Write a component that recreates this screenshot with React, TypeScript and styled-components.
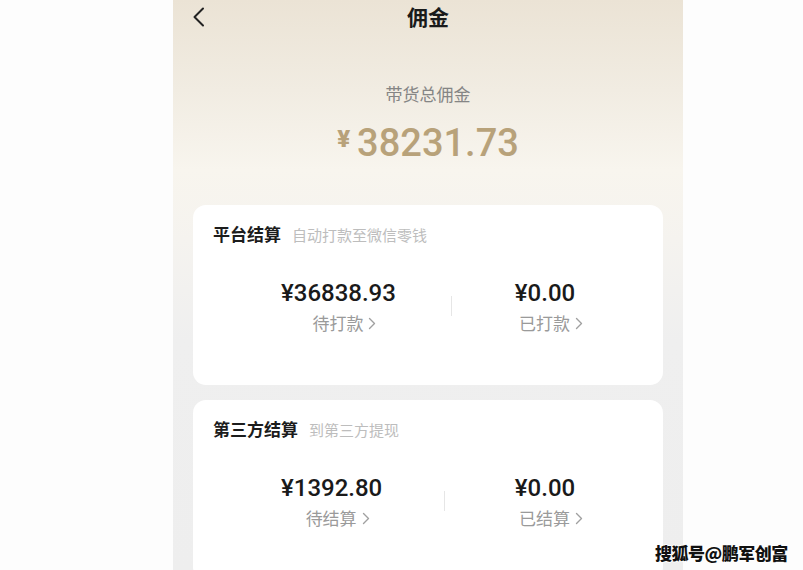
import React from "react";
import styled, { createGlobalStyle } from "styled-components";

const Global = createGlobalStyle`
  html, body { margin: 0; padding: 0; background: #fdfdfd; }
  body { font-family: "Noto Sans CJK SC", "Noto Sans", Roboto, sans-serif; }
  #root { width: 803px; height: 570px; }
`;

const Page = styled.div`
  position: relative;
  width: 803px;
  height: 570px;
  overflow: hidden;
  display: flex;
  padding-left: 173px;
  box-sizing: border-box;
  background: #fdfdfd;
`;

const Phone = styled.div`
  width: 510px;
  height: 570px;
  overflow: hidden;
  display: flex;
  flex-direction: column;
  background: linear-gradient(
    180deg,
    #ebe3d5 0px,
    #f1ece2 90px,
    #f8f5ee 170px,
    #f5f3ef 240px,
    #efefef 340px,
    #eeeeee 100%
  );
`;

const NavBar = styled.div`
  height: 38px;
  display: grid;
  grid-template-columns: 60px 1fr 60px;
  align-items: center;
`;

const BackButton = styled.div`
  display: flex;
  align-items: center;
  padding-left: 19px;
  height: 38px;
  margin-top: -2px;
`;

const Title = styled.div`
  text-align: center;
  font-size: 21px;
  font-weight: 700;
  color: #1a1a1a;
  margin-top: -4px;
`;

const Summary = styled.div`
  display: flex;
  flex-direction: column;
  align-items: center;
  margin-top: 46px;
`;

const SummaryLabel = styled.div`
  font-size: 17px;
  line-height: 24px;
  color: #858585;
`;

const TotalAmount = styled.div`
  margin-top: 13px;
  display: flex;
  align-items: flex-start;
  color: #b8a27a;
  font-family: Roboto, "Noto Sans", sans-serif;
  font-weight: 500;
  height: 48px;
`;

const Yen = styled.span`
  font-size: 24px;
  line-height: 24px;
  margin-top: 8px;
  margin-right: 7px;
  font-weight: 900;
`;

const Big = styled.span`
  font-size: 38px;
  line-height: 48px;
`;

const Cards = styled.div`
  margin-top: 38px;
  padding: 0 20px;
  display: flex;
  flex-direction: column;
  gap: 15px;
`;

const Card = styled.div`
  background: #ffffff;
  border-radius: 13px;
  padding: 17px 20px 51px;
`;

const CardHeader = styled.div`
  display: flex;
  align-items: baseline;
  gap: 11px;
  line-height: 24px;
`;

const CardTitle = styled.span`
  font-size: 17px;
  font-weight: 700;
  color: #1c1c1c;
`;

const CardHint = styled.span`
  font-size: 15px;
  color: #bdbdbd;
`;

const StatRow = styled.div`
  margin-top: 31px;
  display: grid;
  grid-template-columns: auto 1fr auto;
  align-items: center;
  padding: 0 60px 0 68px;
`;

const Stat = styled.div`
  display: flex;
  flex-direction: column;
  align-items: center;
`;

const StatValue = styled.div`
  font-family: Roboto, "Noto Sans", sans-serif;
  font-size: 24px;
  font-weight: 500;
  line-height: 30px;
  color: #1a1a1a;
`;

const StatLabel = styled.div`
  margin-top: 4px;
  display: flex;
  align-items: center;
  gap: 5px;
  font-size: 17px;
  line-height: 22px;
  color: #9a9a9a;
  padding-left: 12px;
`;

const Divider = styled.div`
  justify-self: center;
  width: 1px;
  height: 20px;
  background: #e6e6e6;
`;

const Watermark = styled.div`
  position: absolute;
  left: 655px;
  top: 540px;
  font-size: 17px;
  font-weight: 900;
  color: #111;
  letter-spacing: -0.5px;
  text-shadow: 1px 0 0 #fff, -1px 0 0 #fff, 0 1px 0 #fff, 0 -1px 0 #fff;
`;

const Chevron = () => (
  <svg width="8" height="13" viewBox="0 0 8 13" fill="none">
    <path d="M1.5 1.5 L6.5 6.5 L1.5 11.5" stroke="#a0a0a0" strokeWidth="1.4" strokeLinecap="round" strokeLinejoin="round" />
  </svg>
);

const BackIcon = () => (
  <svg width="14" height="20" viewBox="0 0 14 20" fill="none">
    <path d="M11 1.5 L2.5 10 L11 18.5" stroke="#222" strokeWidth="2" strokeLinecap="round" strokeLinejoin="round" />
  </svg>
);

type StatData = { value: string; label: string };

const Settlement = ({ title, hint, left, right }: { title: string; hint: string; left: StatData; right: StatData }) => (
  <Card>
    <CardHeader>
      <CardTitle>{title}</CardTitle>
      <CardHint>{hint}</CardHint>
    </CardHeader>
    <StatRow>
      <Stat>
        <StatValue>{left.value}</StatValue>
        <StatLabel>
          {left.label}
          <Chevron />
        </StatLabel>
      </Stat>
      <Divider />
      <Stat>
        <StatValue>{right.value}</StatValue>
        <StatLabel>
          {right.label}
          <Chevron />
        </StatLabel>
      </Stat>
    </StatRow>
  </Card>
);

export default function App() {
  return (
    <>
      <Global />
      <Page>
        <Phone>
          <NavBar>
            <BackButton>
              <BackIcon />
            </BackButton>
            <Title>佣金</Title>
            <div />
          </NavBar>
          <Summary>
            <SummaryLabel>带货总佣金</SummaryLabel>
            <TotalAmount>
              <Yen>¥</Yen>
              <Big>38231.73</Big>
            </TotalAmount>
          </Summary>
          <Cards>
            <Settlement
              title="平台结算"
              hint="自动打款至微信零钱"
              left={{ value: "¥36838.93", label: "待打款" }}
              right={{ value: "¥0.00", label: "已打款" }}
            />
            <Settlement
              title="第三方结算"
              hint="到第三方提现"
              left={{ value: "¥1392.80", label: "待结算" }}
              right={{ value: "¥0.00", label: "已结算" }}
            />
          </Cards>
        </Phone>
        <Watermark>搜狐号@鹏军创富</Watermark>
      </Page>
    </>
  );
}
